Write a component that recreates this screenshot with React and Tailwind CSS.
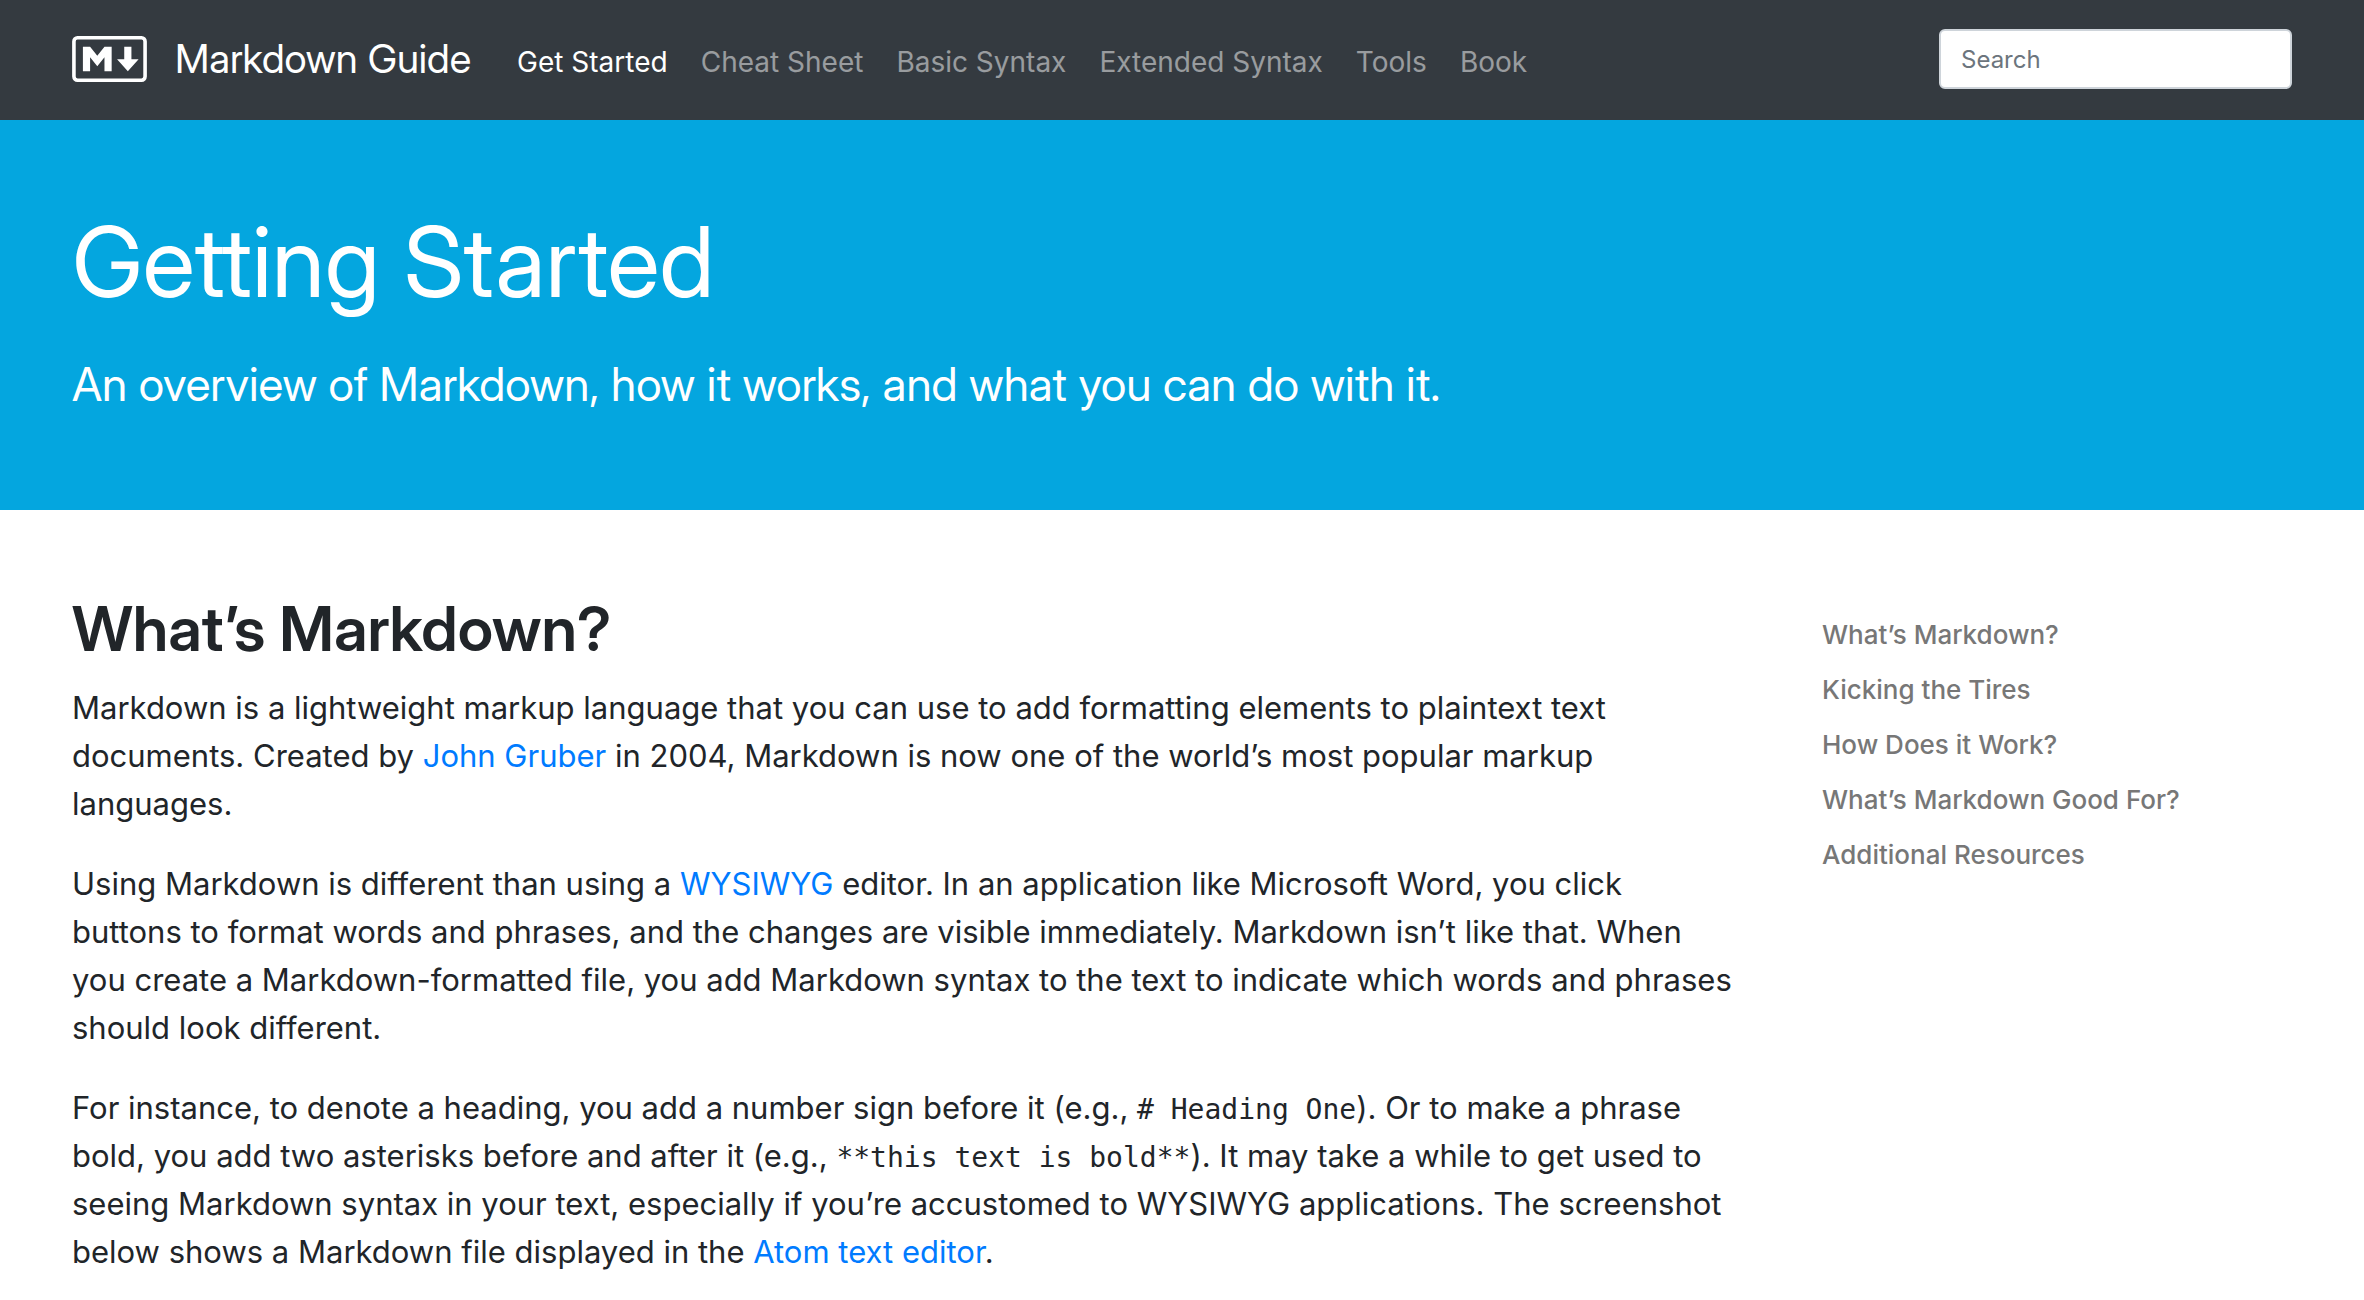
import React, { useState } from 'react';

const navLinks = [
  { label: 'Get Started', href: '#get-started', active: true },
  { label: 'Cheat Sheet', href: '#cheat-sheet' },
  { label: 'Basic Syntax', href: '#basic-syntax' },
  { label: 'Extended Syntax', href: '#extended-syntax' },
  { label: 'Tools', href: '#tools' },
  { label: 'Book', href: '#book' },
];

const tocLinks = [
  { label: 'What’s Markdown?', href: '#whats-markdown' },
  { label: 'Kicking the Tires', href: '#kicking-the-tires' },
  { label: 'How Does it Work?', href: '#how-does-it-work' },
  { label: 'What’s Markdown Good For?', href: '#whats-markdown-good-for' },
  { label: 'Additional Resources', href: '#additional-resources' },
];

function MarkdownMark() {
  return (
    <svg viewBox="0 0 208 128" className="w-[75px] h-[46px]" fill="none" aria-hidden="true">
      <rect x="5" y="5" width="198" height="118" rx="10" stroke="#fff" strokeWidth="10" />
      <path fill="#fff" d="M30 98V30h20l20 25 20-25h20v68H90V59L70 84 50 59v39zM155 98l-30-33h20V30h20v35h20z" />
    </svg>
  );
}

function Navbar() {
  const [query, setQuery] = useState('');

  return (
    <header className="flex items-center h-[120px] px-[72px] pb-0.5 bg-[#343a40]">
      <a href="#home" className="flex items-center gap-7 mr-[46px] text-[40px] text-white whitespace-nowrap font-['Inter_Display','Inter',sans-serif]">
        <MarkdownMark />
        Markdown Guide
      </a>
      <nav className="flex gap-[33px] pt-1.5 text-[28px]">
        {navLinks.map(link => (
          <a key={link.label} href={link.href}
            className={link.active ? 'text-white whitespace-nowrap' : 'text-white/50 whitespace-nowrap'}>
            {link.label}
          </a>
        ))}
      </nav>
      <input type="search" aria-label="Search" placeholder="Search" value={query} onChange={e => setQuery(e.target.value)}
        className="ml-auto w-[353px] h-[60px] px-5 rounded-md border-2 border-[#ced4da] bg-white text-[24px] text-[#495057] placeholder:text-[#6c757d] focus:outline-none" />
    </header>
  );
}

function TextLink({ href, children }) {
  return <a href={href} className="text-[#007bff] hover:underline">{children}</a>;
}

function Code({ children }) {
  return <code className="text-[28px] leading-none font-['DejaVu_Sans_Mono',monospace]">{children}</code>;
}

export default function App() {
  return (
    <div className="bg-white text-[#212529] font-['Inter',sans-serif]">
      <Navbar />

      <section className="px-[72px] pt-[78px] pb-[90px] bg-[#04a6df] text-white font-['Inter_Display','Inter',sans-serif]">
        <h1 className="text-[97px] leading-[128px]">Getting Started</h1>
        <p className="mt-[22px] text-[46px] leading-[72px]">An overview of Markdown, how it works, and what you can do with it.</p>
      </section>

      <div className="flex items-start px-[72px] pt-20">
        <main className="flex-1 pr-[86px]">
          <h2 id="whats-markdown" className="mb-4 text-[62px] leading-[78px] font-semibold font-['Inter_Display','Inter',sans-serif]">What’s Markdown?</h2>
          <div className="flex flex-col gap-8 text-[31px] leading-[48px]">
            <p>
              Markdown is a lightweight markup language that you can use to add formatting elements to plaintext text
              documents. Created by <TextLink href="#john-gruber">John Gruber</TextLink> in 2004, Markdown is now one
              of the world’s most popular markup languages.
            </p>
            <p>
              Using Markdown is different than using a <TextLink href="#wysiwyg">WYSIWYG</TextLink> editor. In an
              application like Microsoft Word, you click buttons to format words and phrases, and the changes are
              visible immediately. Markdown isn’t like that. When you create a Markdown-formatted file, you add
              Markdown syntax to the text to indicate which words and phrases should look different.
            </p>
            <p>
              For instance, to denote a heading, you add a number sign before it (e.g., <Code># Heading One</Code>). Or
              to make a phrase bold, you add two asterisks before and after it (e.g., <Code>**this text is bold**</Code>).
              It may take a while to get used to seeing Markdown syntax in your text, especially if you’re accustomed to
              WYSIWYG applications. The screenshot below shows a Markdown file displayed in
              the <TextLink href="#atom">Atom text editor</TextLink>.
            </p>
          </div>
        </main>

        <aside className="w-[470px] pt-[17px]">
          <nav aria-label="On this page" className="flex flex-col text-[26px] leading-[55px] font-medium text-[#777]">
            {tocLinks.map(link => (
              <a key={link.href} href={link.href} className="whitespace-nowrap">{link.label}</a>
            ))}
          </nav>
        </aside>
      </div>
    </div>
  );
}
